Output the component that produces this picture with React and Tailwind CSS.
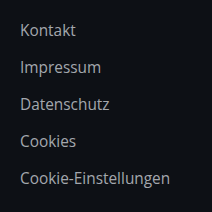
export default function App() {
  const items = ["Kontakt", "Impressum", "Datenschutz", "Cookies", "Cookie-Einstellungen"];
  return (
    <div className="w-[212px] h-[212px] bg-[#0d1015] pt-[18px] pl-5" style={{ fontFamily: '"Open Sans", sans-serif' }}>
      <ul className="flex flex-col gap-3">
        {items.map((t) => (
          <li key={t}>
            <a className="text-[15.4px] leading-6 text-[#a3a7ad]">{t}</a>
          </li>
        ))}
      </ul>
    </div>
  );
}
